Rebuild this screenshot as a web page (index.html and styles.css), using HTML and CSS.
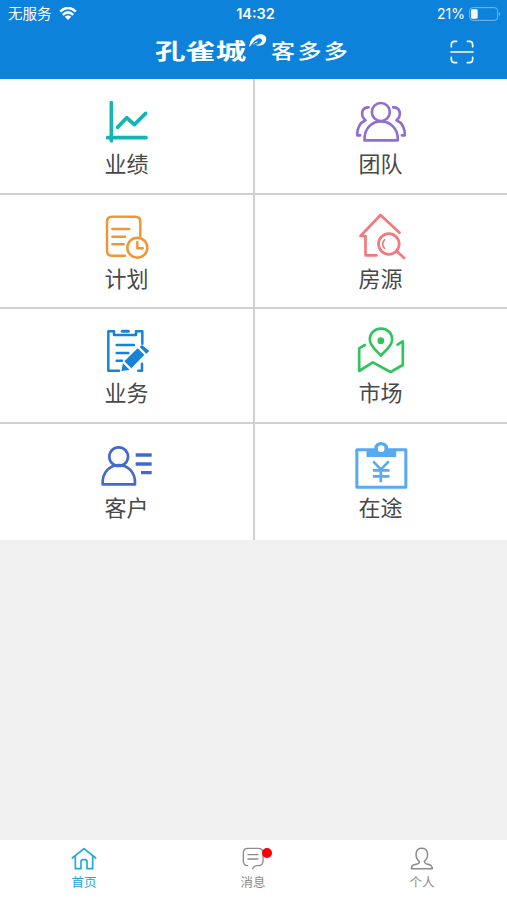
FILE: index.html
```html
<!DOCTYPE html>
<html lang="zh-CN">
<head>
  <meta charset="utf-8">
  <meta name="viewport" content="width=device-width, initial-scale=1">
  <title>客多多</title>
  <link rel="stylesheet" href="styles.css">
</head>
<body>
  <header class="header">
    <div class="status-bar">
      <div class="carrier">
        <span>无服务</span>
        <svg class="wifi" viewBox="0 0 54 40">
          <path d="M3 14Q27-8 51 14M11 24Q27 9 43 24" fill="none" stroke="#fff" stroke-width="7.5"/>
          <path d="M17 30Q27 20 37 30L27 40Z" fill="#fff"/>
        </svg>
      </div>
      <div class="clock">14:32</div>
      <div class="power">
        <span>21%</span>
        <svg class="battery" viewBox="0 0 96 42">
          <rect x="2" y="2" width="84" height="38" rx="9" fill="none" stroke="#7cbcec" stroke-width="3"/>
          <rect x="6" y="7" width="20" height="28" rx="4" fill="#fff"/>
          <path d="M90 14q6 7 0 14z" fill="#7cbcec"/>
        </svg>
      </div>
    </div>
    <div class="title-bar">
      <div class="brand">
        <span class="brand-main">孔雀城</span>
        <svg class="feather" viewBox="0 0 54 42">
          <path d="M1 40C1 20 14 2 34 1C48 1 54 10 51 21C47 33 32 39 18 32C31 33 38 27 39 20C39 14 32 11 26 14C15 19 10 29 1 40Z" fill="#fff"/>
          <path d="M13 31Q17 24 26 24" fill="none" stroke="#fff" stroke-width="3"/>
        </svg>
        <span class="brand-sub">客多多</span>
      </div>
      <svg class="scan" viewBox="0 0 72 72" fill="none" stroke="#fff" stroke-width="5" stroke-linecap="round">
        <path d="M4 20V14Q4 4 14 4H20M52 4H58Q68 4 68 14V20M4 52V58Q4 68 14 68H20M52 68H58Q68 68 68 58V52M3 36H69"/>
      </svg>
    </div>
  </header>

  <main class="menu">
    <a class="item">
      <svg class="icon" viewBox="21 15 180 162" fill="none" stroke="#14b5b3" stroke-width="11" stroke-linecap="round" stroke-linejoin="round">
        <path d="M64 38V152M53 143H168M83 112L110 83L133 104L167 70"/>
      </svg>
      <span>业绩</span>
    </a>
    <a class="item">
      <svg class="icon" viewBox="31.5 15 180 162" fill="none" stroke="#8e6fd0" stroke-width="8" stroke-linecap="round" stroke-linejoin="round">
        <circle cx="121" cy="66" r="27"/>
        <path d="M72 151C69 75 174 75 172 151Z"/>
        <path d="M84 52C62 52 59 77 75 91C57 99 50 113 50 136H59M158 52C181 52 184 77 168 91C186 99 193 113 193 136H184"/>
      </svg>
      <span>团队</span>
    </a>
    <a class="item">
      <svg class="icon" viewBox="21 15 180 162" fill="none" stroke="#f0953a" stroke-width="7.5" stroke-linecap="round" stroke-linejoin="round">
        <path d="M105 152H66Q51 152 51 137V50Q51 35 66 35H136Q151 35 151 50V93M67 72H118M67 95H105M67 118H101"/>
        <circle cx="142" cy="128" r="30"/>
        <path d="M142 111V130H158"/>
      </svg>
      <span>计划</span>
    </a>
    <a class="item">
      <svg class="icon" viewBox="31.5 15 180 162" fill="none" stroke="#f3797b" stroke-width="8" stroke-linecap="round" stroke-linejoin="round">
        <path d="M108 151H75V93H60L120 30L177 83"/>
        <circle cx="145" cy="117" r="31"/>
        <path d="M168 138L191 159"/>
        <path d="M132 104Q121 117 132 130" stroke-width="5"/>
      </svg>
      <span>房源</span>
    </a>
    <a class="item">
      <svg class="icon" viewBox="21 13 180 162" fill="none" stroke="#1583d8" stroke-width="7.5" stroke-linecap="round" stroke-linejoin="round">
        <path d="M87 153H55V35H72V46H138V35H157V72M80 76H132M80 100H115M80 123H96M145 153H156V132"/>
        <path d="M97 35H115" stroke-width="9"/>
        <path d="M94 154L99 131L119 151ZM103 125L143 86L163 105L124 146ZM149 82L156 76L178 94L169 102Z" fill="#1583d8" stroke="none"/>
      </svg>
      <span>业务</span>
    </a>
    <a class="item">
      <svg class="icon" viewBox="31.5 13 180 162" fill="none" stroke="#2fc45c" stroke-width="8" stroke-linecap="round" stroke-linejoin="round">
        <path d="M121 108C108 92 88 79 88 60C88 16 155 16 155 60C155 79 134 92 121 108Z"/>
        <circle cx="121" cy="63" r="10" fill="#2fc45c" stroke="none"/>
        <path d="M73 76L56 86V154L97 128L150 157L187 136V65L171 75"/>
      </svg>
      <span>市场</span>
    </a>
    <a class="item">
      <svg class="icon" viewBox="21 12 180 162" fill="none" stroke="#4169cf" stroke-width="8">
        <circle cx="86" cy="65" r="28"/>
        <path d="M38 148C34 71 139 71 135 148Z" stroke-linejoin="round"/>
        <path d="M137 60H185M137 87H185M153 113H185" stroke-width="10"/>
      </svg>
      <span>客户</span>
    </a>
    <a class="item">
      <svg class="icon" viewBox="31.5 12 180 162" fill="none" stroke="#56a9f3" stroke-width="9" stroke-linejoin="round">
        <path d="M79 44H49V157H196V44H166"/>
        <path d="M78 40H101A21 19 0 0 1 143 40H167V66H78Z" fill="#56a9f3" stroke="none"/>
        <circle cx="122" cy="41" r="10" fill="#fff" stroke="none"/>
        <path d="M98 79L121 103L145 79M121 103V142M97 106H147M97 124H147" stroke-width="8"/>
      </svg>
      <span>在途</span>
    </a>
  </main>

  <nav class="tab-bar">
    <a class="tab active">
      <svg class="tab-icon" viewBox="0 0 78 72" fill="none" stroke="currentColor" stroke-width="5" stroke-linejoin="round" stroke-linecap="round">
        <path d="M4 33L39 5L74 33M13 28V65H30V43Q30 38 35 38H43Q48 38 48 43V65H65V28"/>
      </svg>
      <span>首页</span>
    </a>
    <a class="tab">
      <svg class="tab-icon" viewBox="0 0 78 72" fill="none" stroke="currentColor" stroke-width="4" stroke-linecap="round">
        <path d="M23 56C13 56 10 51 10 43V18Q10 4 24 4H55Q69 4 69 18V43C69 52 64 56 54 56H49Q41 58 38 65M24 23H54M24 36H54"/>
      </svg>
      <span class="dot"></span>
      <span>消息</span>
    </a>
    <a class="tab">
      <svg class="tab-icon" viewBox="0 0 78 72" fill="none" stroke="currentColor" stroke-width="4.5" stroke-linejoin="round">
        <path d="M31 43C17 32 17 4 38 4C60 4 60 32 46 43Q46 48 51 50L64 54Q70 57 70 65H7Q7 57 13 54L27 50Q32 48 31 43Z"/>
      </svg>
      <span>个人</span>
    </a>
  </nav>
</body>
</html>
```
FILE: styles.css
```css
* {
  box-sizing: border-box;
}
body {
  margin: 0;
  height: 900px;
  display: flex;
  flex-direction: column;
  background: #f0f0f0;
  font-family: "Liberation Sans", "Noto Sans CJK SC", sans-serif;
  overflow: hidden;
}
svg {
  display: block;
  flex: none;
}

/* header */
.header {
  height: 79px;
  background: #0c82da;
  color: #fff;
}
.status-bar {
  display: grid;
  grid-template-columns: 1fr auto 1fr;
  align-items: center;
  height: 27px;
  padding: 0 6px 0 8px;
  font-family: Inter, "Noto Sans CJK SC", sans-serif;
  font-size: 14px;
  line-height: 27px;
}
.carrier {
  display: flex;
  align-items: center;
  gap: 7px;
  font-size: 14.5px;
}
.wifi {
  width: 18px;
  height: 13px;
}
.clock {
  padding-left: 2px;
  font-size: 14.5px;
  font-weight: 600;
}
.power {
  display: flex;
  align-items: center;
  justify-content: flex-end;
  gap: 4px;
}
.battery {
  width: 32px;
  height: 14px;
}
.title-bar {
  display: flex;
  align-items: center;
  justify-content: space-between;
  height: 49px;
  padding: 0 33px 0 155px;
}
.brand {
  display: flex;
  align-items: center;
  line-height: 30px;
}
.brand-main {
  width: 92px;
  font-size: 22px;
  font-weight: 700;
  white-space: nowrap;
  transform: scaleX(1.38);
  transform-origin: left;
}
.brand-sub {
  width: 80px;
  margin-left: 4px;
  font-size: 20px;
  font-weight: 500;
  letter-spacing: 2px;
  white-space: nowrap;
  transform: scaleX(1.2);
  transform-origin: left;
}
.feather {
  width: 18px;
  height: 14px;
  margin: -22px 0 0 2px;
}
.scan {
  width: 24px;
  height: 24px;
}

/* menu grid */
.menu {
  display: grid;
  grid-template-columns: 255px 252px;
  grid-template-rows: 116px 114px 115px 116px;
  background: #fff;
}
.item {
  display: flex;
  flex-direction: column;
  align-items: center;
  padding-top: 15px;
  color: #484848;
  font-size: 22px;
  line-height: 32px;
  border-bottom: 2px solid #d0d0d0;
}
.item:nth-child(-n+2) {
  padding-top: 16px;
}
.item:nth-child(odd) {
  border-right: 2px solid #d0d0d0;
}
.item:nth-child(even) {
  padding-right: 1px;
}
.item:nth-last-child(-n+2) {
  border-bottom: none;
}
.icon {
  width: 60px;
  height: 54px;
}

/* bottom tabs */
.tab-bar {
  display: grid;
  grid-template-columns: repeat(3, 1fr);
  height: 60px;
  margin-top: auto;
  background: #fff;
}
.tab {
  position: relative;
  display: flex;
  flex-direction: column;
  align-items: center;
  padding: 7px 1px 0 0;
  color: #8c8c8c;
  font-size: 12.5px;
  line-height: 25px;
}
.tab.active {
  color: #24a8d6;
}
.tab-icon {
  width: 26px;
  height: 24px;
}
.dot {
  position: absolute;
  top: 8px;
  left: calc(50% + 8px);
  width: 10px;
  height: 10px;
  border-radius: 50%;
  background: #f00;
}
```
